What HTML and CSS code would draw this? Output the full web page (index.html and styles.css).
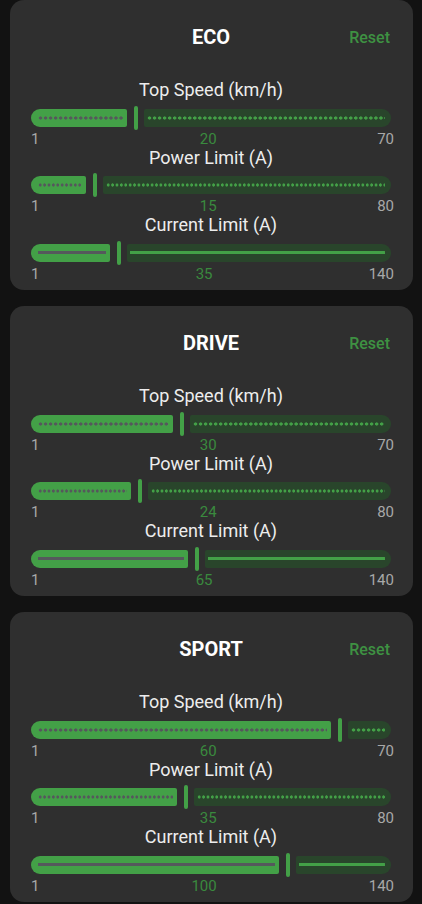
FILE: index.html
```html
<!DOCTYPE html>
<html lang="en">

<head>
    <meta charset="UTF-8">
    <meta name="viewport" content="width=device-width, initial-scale=1.0">
    <title>Ride Modes</title>
    <link rel="stylesheet" href="styles.css">
</head>

<body>
    <div class="modes">
        <div class="card">
            <div class="card-head">
                <span></span>
                <h2 class="mode-name">ECO</h2>
                <button class="reset">Reset</button>
            </div>
            <div class="setting speed">
                <div class="setting-label">Top Speed (km/h)</div>
                <div class="slider">
                    <div class="track active" style="width: 96px"></div>
                    <div class="thumb"></div>
                    <div class="track inactive"></div>
                </div>
                <div class="scale"><span>1</span><span class="value">20</span><span>70</span></div>
            </div>
            <div class="setting power">
                <div class="setting-label">Power Limit (A)</div>
                <div class="slider">
                    <div class="track active" style="width: 55px"></div>
                    <div class="thumb"></div>
                    <div class="track inactive"></div>
                </div>
                <div class="scale"><span>1</span><span class="value">15</span><span>80</span></div>
            </div>
            <div class="setting current">
                <div class="setting-label">Current Limit (A)</div>
                <div class="slider">
                    <div class="track active" style="width: 79px"></div>
                    <div class="thumb"></div>
                    <div class="track inactive"></div>
                </div>
                <div class="scale"><span>1</span><span class="value">35</span><span>140</span></div>
            </div>
        </div>

        <div class="card">
            <div class="card-head">
                <span></span>
                <h2 class="mode-name">DRIVE</h2>
                <button class="reset">Reset</button>
            </div>
            <div class="setting speed">
                <div class="setting-label">Top Speed (km/h)</div>
                <div class="slider">
                    <div class="track active" style="width: 142px"></div>
                    <div class="thumb"></div>
                    <div class="track inactive"></div>
                </div>
                <div class="scale"><span>1</span><span class="value">30</span><span>70</span></div>
            </div>
            <div class="setting power">
                <div class="setting-label">Power Limit (A)</div>
                <div class="slider">
                    <div class="track active" style="width: 100px"></div>
                    <div class="thumb"></div>
                    <div class="track inactive"></div>
                </div>
                <div class="scale"><span>1</span><span class="value">24</span><span>80</span></div>
            </div>
            <div class="setting current">
                <div class="setting-label">Current Limit (A)</div>
                <div class="slider">
                    <div class="track active" style="width: 157px"></div>
                    <div class="thumb"></div>
                    <div class="track inactive"></div>
                </div>
                <div class="scale"><span>1</span><span class="value">65</span><span>140</span></div>
            </div>
        </div>

        <div class="card">
            <div class="card-head">
                <span></span>
                <h2 class="mode-name">SPORT</h2>
                <button class="reset">Reset</button>
            </div>
            <div class="setting speed">
                <div class="setting-label">Top Speed (km/h)</div>
                <div class="slider">
                    <div class="track active" style="width: 300px"></div>
                    <div class="thumb"></div>
                    <div class="track inactive"></div>
                </div>
                <div class="scale"><span>1</span><span class="value">60</span><span>70</span></div>
            </div>
            <div class="setting power">
                <div class="setting-label">Power Limit (A)</div>
                <div class="slider">
                    <div class="track active" style="width: 146px"></div>
                    <div class="thumb"></div>
                    <div class="track inactive"></div>
                </div>
                <div class="scale"><span>1</span><span class="value">35</span><span>80</span></div>
            </div>
            <div class="setting current">
                <div class="setting-label">Current Limit (A)</div>
                <div class="slider">
                    <div class="track active" style="width: 248px"></div>
                    <div class="thumb"></div>
                    <div class="track inactive"></div>
                </div>
                <div class="scale"><span>1</span><span class="value">100</span><span>140</span></div>
            </div>
        </div>
    </div>
</body>

</html>
```

FILE: styles.css
```css
:root {
    --green: #43a047;
    --green-dim: #29452b;
    --tick-on: #55585c;
}

* {
    box-sizing: border-box;
}

body {
    margin: 0;
    padding: 0 9px 0 10px;
    background-color: #121212;
    font-family: Roboto, "Noto Sans", sans-serif;
    color: #ededed;
}

.modes {
    display: flex;
    flex-direction: column;
    gap: 16px;
}

.card {
    background: #2f2f2f;
    border-radius: 14px;
    padding: 25px 22px 8.5px 21px;
}

.card-head {
    display: grid;
    grid-template-columns: 1fr auto 1fr;
    align-items: center;
    height: 24px;
    margin-bottom: 30px;
}

.mode-name {
    margin: 0;
    font-size: 20px;
    font-weight: 700;
    line-height: 24px;
    color: #fff;
}

.reset {
    justify-self: end;
    margin-right: 1px;
    padding: 0;
    border: none;
    background: none;
    font-family: inherit;
    font-size: 16px;
    font-weight: 500;
    color: #3e9142;
    cursor: pointer;
}

.setting-label {
    font-size: 18px;
    line-height: 22px;
    text-align: center;
}

.slider {
    display: flex;
    align-items: center;
    height: 25.5px;
    margin-top: 4px;
}

.track {
    height: 18px;
}

.active {
    flex: none;
    border-radius: 9px 2px 2px 9px;
    padding: 0 4px 0 7px;
}

.inactive {
    flex: 1;
    border-radius: 2px 9px 9px 2px;
    padding: 0 6px 0 3px;
}

.thumb {
    flex: none;
    width: 4px;
    height: 24px;
    margin: 0 6.5px;
    border-radius: 2px;
    background: var(--green);
}

/* tick marks: one dot per step */
.speed .active {
    background: radial-gradient(circle, var(--tick-on) 0 1.4px, transparent 1.8px) 0 50% / 5.04px 4px repeat-x content-box, var(--green);
}

.speed .inactive {
    background: radial-gradient(circle, var(--green) 0 1.4px, transparent 1.8px) 0 50% / 5.04px 4px repeat-x content-box, var(--green-dim);
}

.power .active {
    background: radial-gradient(circle, var(--tick-on) 0 1.4px, transparent 1.8px) 0 50% / 4.4px 4px repeat-x content-box, var(--green);
}

.power .inactive {
    background: radial-gradient(circle, var(--green) 0 1.4px, transparent 1.8px) 0 50% / 4.4px 4px repeat-x content-box, var(--green-dim);
}

.current .active {
    background: linear-gradient(var(--tick-on), var(--tick-on)) 0 50% / 100% 3px no-repeat content-box, var(--green);
}

.current .inactive {
    background: linear-gradient(var(--green), var(--green)) 0 50% / 100% 3px no-repeat content-box, var(--green-dim);
}

.scale {
    display: flex;
    justify-content: space-between;
    margin-right: -3px;
    font-size: 15px;
    line-height: 16px;
    color: #a8a8a8;
}

.scale .value {
    color: #3a8a3e;
}
```
